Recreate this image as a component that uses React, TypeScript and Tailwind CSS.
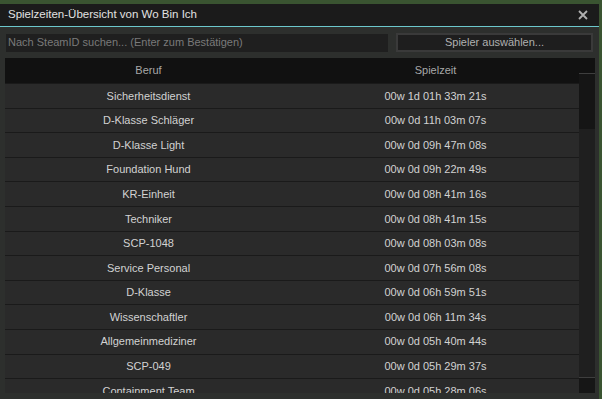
const ROWS = [
  ['Sicherheitsdienst', '00w 1d 01h 33m 21s'],
  ['D-Klasse Schläger', '00w 0d 11h 03m 07s'],
  ['D-Klasse Light', '00w 0d 09h 47m 08s'],
  ['Foundation Hund', '00w 0d 09h 22m 49s'],
  ['KR-Einheit', '00w 0d 08h 41m 16s'],
  ['Techniker', '00w 0d 08h 41m 15s'],
  ['SCP-1048', '00w 0d 08h 03m 08s'],
  ['Service Personal', '00w 0d 07h 56m 08s'],
  ['D-Klasse', '00w 0d 06h 59m 51s'],
  ['Wissenschaftler', '00w 0d 06h 11m 34s'],
  ['Allgemeinmediziner', '00w 0d 05h 40m 44s'],
  ['SCP-049', '00w 0d 05h 29m 37s'],
  ['Containment Team', '00w 0d 05h 28m 06s'],
];

export default function App() {
  return (
    <div
      className="w-[602px] h-[399px] overflow-hidden bg-[#3a5431] pt-[4px] pr-[3px]"
      style={{ fontFamily: '"Liberation Sans", Arial, sans-serif' }}
    >
      <div className="w-[599px] h-[395px] flex flex-col">
        {/* Title bar */}
        <div className="h-[23px] shrink-0 bg-[#1b1b1b] border-b border-[#6cc7cc] flex items-center justify-between pl-[8px] pr-[11px]">
          <span className="text-[11.5px] text-[#e2e2e2]">Spielzeiten-Übersicht von Wo Bin Ich</span>
          <svg width="10" height="10" viewBox="0 0 10 10" className="text-[#b0b0b0]">
            <path d="M1 1L9 9M9 1L1 9" stroke="currentColor" strokeWidth="1.8" />
          </svg>
        </div>

        {/* Body */}
        <div className="flex-1 bg-[#2d2f2d] pl-[5px] pr-[4px] pt-[6px] flex flex-col overflow-hidden">
          <div className="flex items-center h-[19px] shrink-0">
            <div className="ml-[1px] w-[382px] h-[18px] bg-[#1f1f1f] flex items-center pl-[2px] text-[11px] text-[#7a7a7a]">
              Nach SteamID suchen... (Enter zum Bestätigen)
            </div>
            <div className="ml-[8px] w-[197px] h-[19px] bg-[#3a3a3a] p-[2px]">
              <div className="w-full h-full bg-[#1e1e1e] flex items-center justify-center text-[11px] text-[#b0b0b0]">
                Spieler auswählen...
              </div>
            </div>
          </div>

          {/* Table */}
          <div className="mt-[6px] flex flex-1 overflow-hidden">
            <div className="w-[574px] flex flex-col bg-[#1a1a1a]">
              <div className="h-[25px] shrink-0 bg-[#111111] grid grid-cols-2 text-[11px] text-[#a8a8a8]">
                <div className="flex items-center justify-center">Beruf</div>
                <div className="flex items-center justify-center">Spielzeit</div>
              </div>
              <div className="flex flex-col gap-[1px] pt-[1px] overflow-hidden">
                {ROWS.map(([job, time]) => (
                  <div
                    key={job}
                    className="h-[23.6px] shrink-0 bg-[#2a2a2a] grid grid-cols-2 text-[11px] text-[#d2d2d2]"
                  >
                    <div className="flex items-center justify-center">{job}</div>
                    <div className="flex items-center justify-center">{time}</div>
                  </div>
                ))}
              </div>
            </div>

            {/* Scrollbar */}
            <div className="w-[16px] flex flex-col">
              <div className="h-[15px] shrink-0 bg-[#111111]" />
              <div className="h-[1px] shrink-0 bg-[#3e3e3e]" />
              <div className="h-[55px] shrink-0 bg-[#151515]" />
              <div className="flex-1 bg-[#1f1f1f]" />
              <div className="h-[1px] shrink-0 bg-[#3e3e3e]" />
              <div className="h-[15px] shrink-0 bg-[#161616]" />
            </div>
          </div>
          <div className="h-[6px] shrink-0" />
        </div>
      </div>
    </div>
  );
}
